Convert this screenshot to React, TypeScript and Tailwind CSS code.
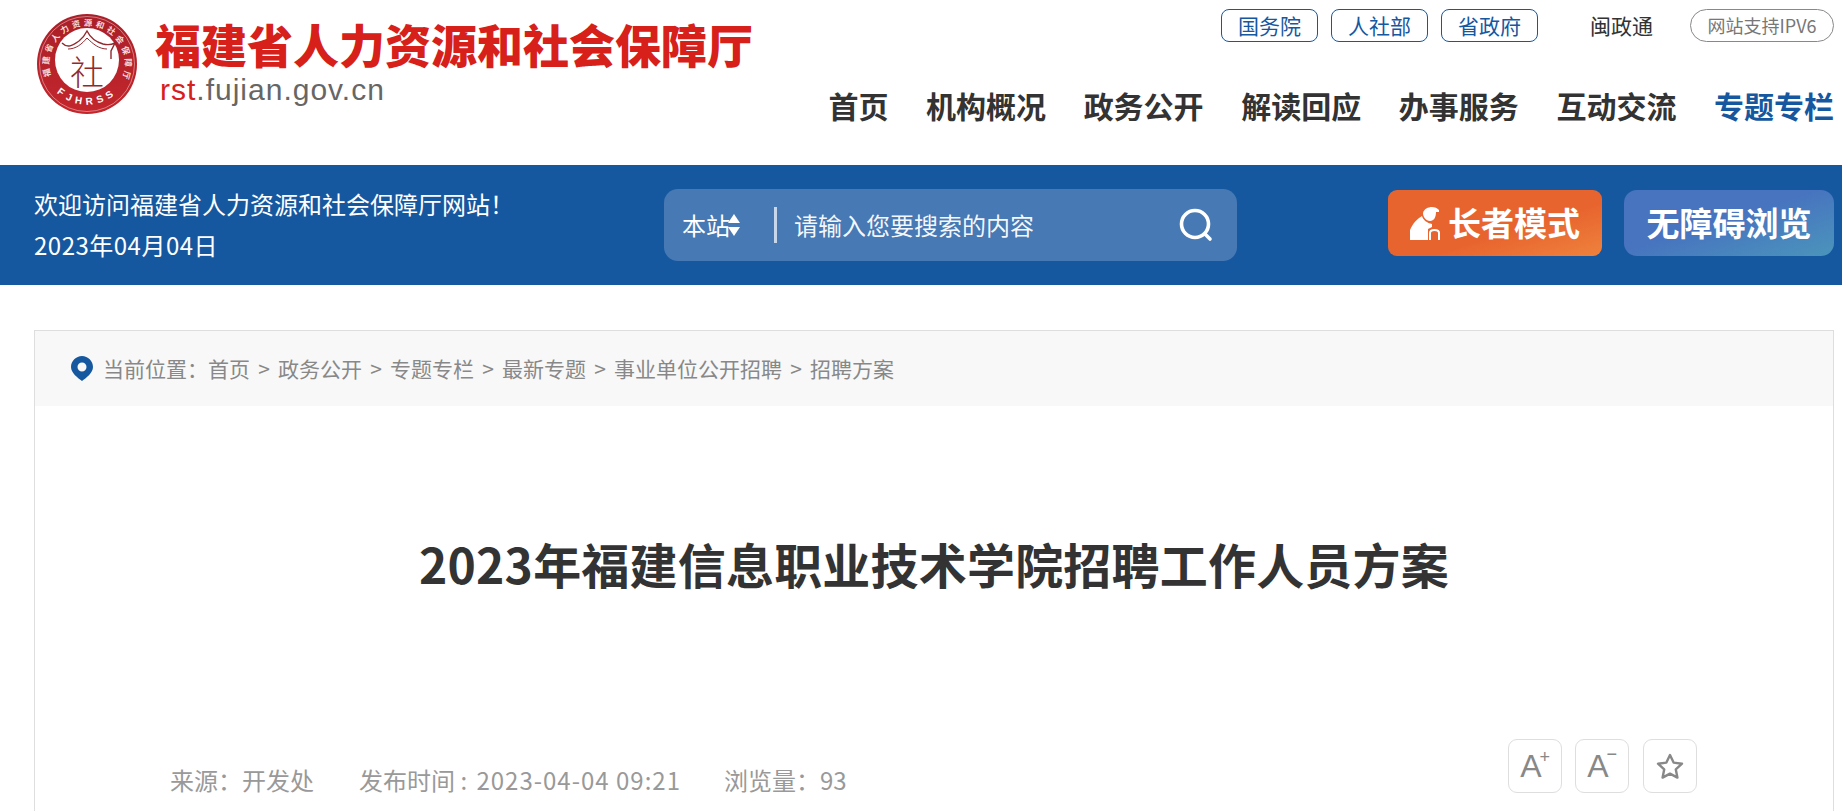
const cjk = "font-['Microsoft_YaHei','Noto_Sans_CJK_SC',sans-serif]"

const navItems = ["首页", "机构概况", "政务公开", "解读回应", "办事服务", "互动交流"]
const crumbs = ["首页", "政务公开", "专题专栏", "最新专题", "事业单位公开招聘", "招聘方案"]
const topLinks = ["国务院", "人社部", "省政府"]

function Logo() {
  return (
    <svg width="100" height="102" viewBox="0 0 100 102" className="shrink-0">
      <defs>
        <path id="ring-top" d="M 14 63 A 38 38 0 1 1 86 63" fill="none" />
        <path id="ring-bottom" d="M 11 68 A 44 44 0 0 0 89 68" fill="none" />
        <linearGradient id="ring" x1="0" y1="0" x2="0" y2="1">
          <stop offset="0" stopColor="#a91f28" />
          <stop offset="1" stopColor="#c4262c" />
        </linearGradient>
      </defs>
      <circle cx="50" cy="51" r="50" fill="url(#ring)" />
      <circle cx="50" cy="51" r="47.5" fill="none" stroke="#fff" strokeWidth="0.6" opacity="0.7" />
      <circle cx="50" cy="47" r="32" fill="#fff" />
      <text fontSize="8.4" fontWeight="700" fill="#f6dcdc" fontFamily="'Noto Sans CJK SC', sans-serif">
        <textPath href="#ring-top" textLength="146">福建省人力资源和社会保障厅</textPath>
      </text>
      <text fontSize="10" fontWeight="700" fill="#fff" fontFamily="'Liberation Sans', sans-serif">
        <textPath href="#ring-bottom" startOffset="50%" textAnchor="middle" letterSpacing="4.5">FJHRSS</textPath>
      </text>
      <path d="M25 30 C31 36 36 32 42 28 C46 25 48 22 50 18 C53 24 59 29 66 31 C70 32 74 32 78 30 L74 38 L74 46" fill="none" stroke="#8f2a2e" strokeWidth="1.4" />
      <path d="M31 36 C39 36 45 31 50 25 C56 31 62 36 70 36" fill="none" stroke="#8f2a2e" strokeWidth="1" />
      <text x="50" y="72" textAnchor="middle" fontSize="34" fontWeight="300" fill="#8f2a2e" fontFamily="'Noto Sans CJK SC', sans-serif">社</text>
    </svg>
  )
}

function ElderIcon() {
  return (
    <svg width="30" height="33" viewBox="0 0 30 33" fill="#fff" className="shrink-0">
      <path d="M13 6 C14 2 18 0 22 0 C25 0 27 1 29 3 L29 5 L26 5 C26 10 24 14 20 14 C16 14 13 10 13 6 Z" />
      <path d="M0 33 L0 23 C3 16 7 12 12 9 C13 13 17 16 22 17 L22 20 L18 22 L18 33 Z" />
      <path d="M20 33 L20 26 C20 22 29 22 29 26 L29 33" fill="none" stroke="#fff" strokeWidth="2" />
    </svg>
  )
}

export default function App() {
  return (
    <div className={`h-[811px] w-[1842px] overflow-hidden bg-white ${cjk}`}>
      {/* Header */}
      <header className="flex h-[165px] justify-between pl-[37px] pr-[8px]">
        <div className="flex items-start gap-[18px] pt-[13px]">
          <Logo />
          <div className="pt-[1px]">
            <div className="text-[46px] leading-[58px] font-black text-[#d7201a] whitespace-nowrap">
              福建省人力资源和社会保障厅
            </div>
            <div className="pl-[5px] pt-[2px] font-['Liberation_Sans',sans-serif] text-[30px] leading-[32px] tracking-[1px] text-[#666]">
              <span className="text-[#d7201a]">rst</span>.fujian.gov.cn
            </div>
          </div>
        </div>

        <div className="flex flex-col items-end">
          <div className="flex h-[33px] mt-[9px] items-center">
            {topLinks.map((t) => (
              <a
                key={t}
                className="mr-[13px] flex h-[33px] w-[97px] items-center justify-center rounded-[8px] border border-[#15589f] text-[21px] text-[#15589f]"
              >
                {t}
              </a>
            ))}
            <span className="ml-[39px] text-[21px] text-[#333]">闽政通</span>
            <span className="ml-[37px] flex h-[33px] w-[144px] items-center justify-center rounded-full border border-[#888] text-[18px] text-[#777]">
              网站支持IPV6
            </span>
          </div>
          <nav className="mt-[43px] flex gap-[37.6px] text-[30px] leading-[40px] font-bold text-[#333]">
            {navItems.map((n) => (
              <a key={n}>{n}</a>
            ))}
            <a className="text-[#15589f]">专题专栏</a>
          </nav>
        </div>
      </header>

      {/* Blue band */}
      <div className="flex h-[120px] items-center bg-[#16589f] pl-[34px] text-white">
        <div className="mb-[3px] w-[630px] text-[24px] leading-[41px]">
          <div>欢迎访问福建省人力资源和社会保障厅网站！</div>
          <div className="tracking-[0.5px]">2023年04月04日</div>
        </div>

        <div className="flex h-[72px] w-[573px] items-center rounded-[14px] bg-[#4779b4] pl-[18px] pr-[24px]">
          <span className="text-[24px]">本站</span>
          <svg width="14" height="24" viewBox="0 0 14 24" fill="#fff" className="-ml-[3px] shrink-0">
            <path d="M7 1 L13 10 L1 10 Z" />
            <path d="M1 14 L13 14 L7 23 Z" />
          </svg>
          <span className="ml-[33px] h-[36px] w-[3px] bg-white/70" />
          <span className="ml-[17px] flex-1 text-[24px] text-white/95">请输入您要搜索的内容</span>
          <svg width="34" height="34" viewBox="0 0 34 34" fill="none" stroke="#fff" strokeWidth="3.6" strokeLinecap="round">
            <circle cx="16" cy="16" r="13.5" />
            <path d="M26 26 L31 31" />
          </svg>
        </div>

        <div className="mb-[4px] ml-[151px] flex h-[66px] w-[214px] items-center justify-center gap-[8px] rounded-[9px] bg-linear-to-br from-[#e8642f] from-60% to-[#ee823c]">
          <ElderIcon />
          <span className="text-[33px] font-bold">长者模式</span>
        </div>
        <div className="mb-[4px] ml-[22px] flex h-[66px] w-[210px] items-center justify-center rounded-[13px] bg-linear-to-br from-[#4773bf] from-45% to-[#4b95bb] text-[33px] font-bold">
          无障碍浏览
        </div>
      </div>

      {/* Article card */}
      <main className="mt-[45px] ml-[34px] h-[500px] w-[1800px] border border-b-0 border-[#dedede]">
        <div className="flex h-[75px] items-center bg-[#f8f8f8] pl-[36px] text-[21px] text-[#888]">
          <svg width="22" height="25" viewBox="0 0 22 25" className="mr-[10px] shrink-0">
            <path
              fillRule="evenodd"
              fill="#15589f"
              d="M11 0 C17 0 22 5 22 11 C22 17 15 22 11 25 C7 22 0 17 0 11 C0 5 5 0 11 0 Z M11 6.5 A4.5 4.5 0 1 0 11 15.5 A4.5 4.5 0 1 0 11 6.5 Z"
            />
          </svg>
          <span>当前位置：</span>
          {crumbs.map((c, i) => (
            <span key={c} className="flex">
              {i > 0 && <span className="w-[28px] text-center">&gt;</span>}
              {c}
            </span>
          ))}
        </div>

        <h1 className="pt-[125px] text-center text-[48px] leading-[64px] font-bold tracking-[0.2px] text-[#333]">
          2023年福建信息职业技术学院招聘工作人员方案
        </h1>

        <div className="mt-[144px] flex items-start pl-[135px] text-[24px] leading-[36px] text-[#999]">
          <span className="w-[189px] pt-[23px]">来源：开发处</span>
          <span className="w-[365px] pt-[23px]">
            发布时间 : <span className="ml-[4px] tracking-[1px]">2023-04-04 09:21</span>
          </span>
          <span className="w-[784px] pt-[23px]">浏览量：93</span>
          <div className="flex gap-[13px]">
            <button className="relative flex h-[54px] w-[54px] items-center justify-center rounded-[9px] border border-[#dedede] pr-[8px] font-['Liberation_Sans',sans-serif] text-[32px] text-[#888]">
              A<span className="absolute top-[7px] right-[11px] text-[18px] leading-[20px]">+</span>
            </button>
            <button className="relative flex h-[54px] w-[54px] items-center justify-center rounded-[9px] border border-[#dedede] pr-[8px] font-['Liberation_Sans',sans-serif] text-[32px] text-[#888]">
              A<span className="absolute top-[4px] right-[11px] text-[18px] leading-[20px]">−</span>
            </button>
            <button className="ml-[1px] flex h-[54px] w-[54px] items-center justify-center rounded-[9px] border border-[#dedede]">
              <svg width="28" height="27" viewBox="0 0 28 27" fill="none" stroke="#888" strokeWidth="2.4" strokeLinejoin="round">
                <path d="M14 2 L17.6 9.6 L26 10.7 L19.8 16.4 L21.4 24.6 L14 20.6 L6.6 24.6 L8.2 16.4 L2 10.7 L10.4 9.6 Z" />
              </svg>
            </button>
          </div>
        </div>
      </main>
    </div>
  )
}
